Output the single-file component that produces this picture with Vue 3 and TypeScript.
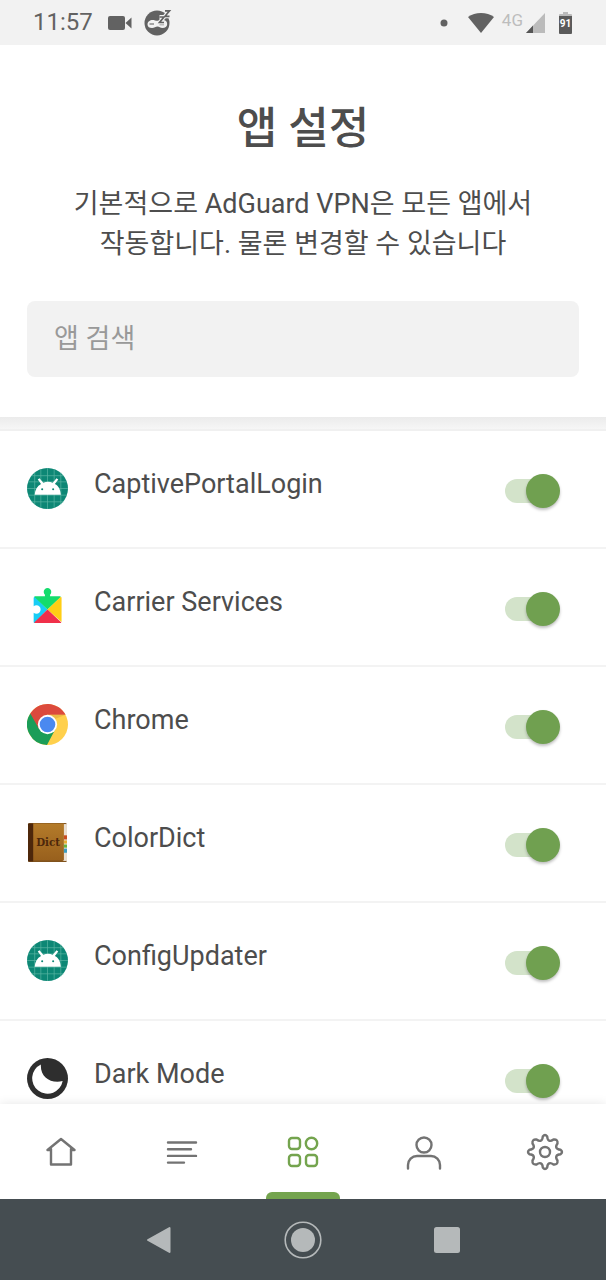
<script setup lang="ts">
import { ref } from 'vue'

type IconName = 'android' | 'services' | 'chrome' | 'dict' | 'dark'

interface AppEntry {
  id: string
  name: string
  icon: IconName
  enabled: boolean
}

const query = ref('')
const apps = ref<AppEntry[]>([
  { id: 'captive', name: 'CaptivePortalLogin', icon: 'android', enabled: true },
  { id: 'carrier', name: 'Carrier Services', icon: 'services', enabled: true },
  { id: 'chrome', name: 'Chrome', icon: 'chrome', enabled: true },
  { id: 'colordict', name: 'ColorDict', icon: 'dict', enabled: true },
  { id: 'config', name: 'ConfigUpdater', icon: 'android', enabled: true },
  { id: 'dark', name: 'Dark Mode', icon: 'dark', enabled: true },
])
</script>

<template>
  <div class="screen" lang="ko">
    <div class="status">
      <div class="status-group">
        <span class="clock">11:57</span>
        <svg class="camera" width="24" height="14" viewBox="0 0 24 14">
          <rect x="0" y="0" width="17" height="14" rx="2" fill="#626262" />
          <path d="M17.500 7 23.500 1.500v11z" fill="#626262" />
        </svg>
        <svg class="sleep" width="28" height="28" viewBox="0 0 28 28">
          <circle cx="13" cy="15" r="12.500" fill="#626262" />
          <path d="M3.500 16.500c0-3 2.500-4.500 5-4.500 2 0 3 .8 5 .8s3-1 5.500-.8c2.500 0 4.200 1.500 4.200 4s-2 4-4.700 4c-2.500 0-3-1.500-5-1.500s-3 1.500-5.500 1.500-4.500-1-4.500-3.500z" fill="#f2f2f2" />
          <path d="M5.500 16h4.500M15.500 16.500h4.500" stroke="#8a8a8a" stroke-width="1.300" />
          <g fill="none">
            <path d="M15.500 9h4.500l-4.500 5.500H20" stroke="#f2f2f2" stroke-width="4" />
            <path d="M21 2.800h4.500L21 8.300h4.500" stroke="#f2f2f2" stroke-width="4" />
            <path d="M15.500 9h4.500l-4.500 5.500H20M21 2.800h4.500L21 8.300h4.500" stroke="#626262" stroke-width="1.700" />
          </g>
        </svg>
      </div>
      <div class="status-group">
        <svg width="8" height="8" viewBox="0 0 8 8"><circle cx="4" cy="4" r="3.500" fill="#626262" /></svg>
        <svg class="wifi" width="28" height="22" viewBox="0 0 28 22">
          <path d="M1 5C8-.5 20-.5 27 5L14 21z" fill="#626262" />
        </svg>
        <span class="net">4G</span>
        <svg width="19" height="20" viewBox="0 0 19 20">
          <path d="M0 20 19 0v20z" fill="#bbb" />
          <path d="M0 20l7-7.400V20z" fill="#555" />
        </svg>
        <svg class="battery" width="13" height="22" viewBox="0 0 13 22">
          <path d="M4 0h5v2h3a1 1 0 0 1 1 1v2H0V3a1 1 0 0 1 1-1h3z" fill="#bbb" />
          <path d="M0 4h13v17a1 1 0 0 1-1 1H1a1 1 0 0 1-1-1z" fill="#5a5a5a" />
          <text x="6.500" y="15" text-anchor="middle" font-size="10" font-weight="700" fill="#fff">91</text>
        </svg>
      </div>
    </div>

    <header class="head">
      <h1>앱 설정</h1>
      <p>기본적으로 AdGuard VPN은 모든 앱에서<br />작동합니다. 물론 변경할 수 있습니다</p>
      <input v-model="query" class="search" type="search" placeholder="앱 검색" aria-label="앱 검색" />
    </header>
    <div class="divider"></div>

    <ul class="list">
      <li v-for="app in apps" :key="app.id" class="row">
        <svg v-if="app.icon === 'android'" class="app-icon" viewBox="0 0 40 40">
          <circle cx="20" cy="20" r="20" fill="#0d8775" />
          <path d="M7.500 4.500v31M13.500 1v38M20 0v40M26.500 1v38M33 4.500v31M4.500 7.500h31M1 13.500h38M0 20h40M1 26.500h38M4.500 33h31" stroke="#58b3a3" stroke-width=".7" />
          <path d="M7.500 26c.3-4.800 2.500-8.500 6.300-10.500L10.500 11.300l1.700-1.300 3.700 4.300a14 14 0 0 1 9.200 0l3.700-4.300 1.700 1.300-3.300 4.200c3.800 2 5.500 5.700 5.800 10.500z" fill="#fff" />
          <circle cx="14.800" cy="20.800" r="1" fill="#0d8775" />
          <circle cx="25.500" cy="20.800" r="1" fill="#0d8775" />
        </svg>
        <svg v-else-if="app.icon === 'services'" class="app-icon" viewBox="0 0 40 40">
          <path d="M6.500 12c0-1 .5-1.500 1.500-1.500L20 23 7.500 36c-.7 0-1-.5-1-1.200v-8.600c.8.600 1.700.9 2.700.9a4 4 0 0 0 0-8.200c-1 0-1.900.3-2.700.9z" fill="#18cdf5" />
          <path d="M8 10h9.500V8.500a3.700 3.700 0 1 1 5 0V10H32c.6 0 1 .3 1 .8L20 23 7 10.500z" fill="#14dc6c" />
          <path d="M33 10.500c.6.300.7.700.7 1.300V35L20 23z" fill="#ffce14" />
          <path d="M20 23 33.500 35.500c-.3.500-.7.700-1.300.7H8c-.5 0-.8-.2-1-.5z" fill="#f0304a" />
        </svg>
        <svg v-else-if="app.icon === 'chrome'" class="app-icon" viewBox="0 0 40 40">
          <circle cx="20" cy="20" r="20" fill="#ffd04c" />
          <path d="M20 20 28 24 19.500 40A20 20 0 0 1 3.200 9.200z" fill="#1b9d58" />
          <path d="M3.200 9.200A20 20 0 0 1 37.600 10.500L20 10.500 11.500 24z" fill="#dc4a3d" />
          <path d="M20 10.500h17.600l-11 4.300z" fill="#d9a63d" opacity=".5" />
          <circle cx="20" cy="20" r="9.400" fill="#fff" />
          <circle cx="20" cy="20" r="7.600" fill="#4a89f0" />
        </svg>
        <svg v-else-if="app.icon === 'dict'" class="app-icon" viewBox="0 0 40 40">
          <defs>
            <linearGradient :id="app.id + '-cover'" x1="0" y1="0" x2="0" y2="1">
              <stop offset="0" stop-color="#b47b2a" />
              <stop offset="1" stop-color="#98601d" />
            </linearGradient>
          </defs>
          <rect x="1" y="1" width="38" height="38" rx="1.500" fill="#80521c" />
          <rect x="35" y="2" width="4" height="36" fill="#eadfd2" />
          <rect x="6" y="1.500" width="30" height="36" :fill="`url(#${app.id}-cover)`" />
          <rect x="1" y="1.500" width="5" height="37" fill="#4d270b" />
          <rect x="36" y="13" width="3" height="4" fill="#c84c22" />
          <rect x="36" y="18" width="3" height="3" fill="#e7ad31" />
          <rect x="36" y="22" width="3" height="3" fill="#65b33b" />
          <rect x="36" y="26" width="3" height="4" fill="#3b9cc0" />
          <text class="dict-text" x="20.500" y="23" text-anchor="middle" font-size="10" font-weight="700" fill="#4d270b">Dict</text>
        </svg>
        <svg v-else class="app-icon" viewBox="0 0 40 40">
          <circle cx="20" cy="20" r="20" fill="#2e2e2e" />
          <path d="M13.500 6.300A15 15 0 1 0 34.800 22.500C23 25 13 19 13.500 6.300z" fill="#fff" />
        </svg>
        <label class="name" :for="app.id">{{ app.name }}</label>
        <input :id="app.id" v-model="app.enabled" class="switch" type="checkbox" role="switch" />
      </li>
    </ul>

    <nav class="tabs">
      <button type="button" class="tab" aria-label="홈">
        <svg width="32" height="32" viewBox="0 0 32 32">
          <path d="M6 13V28.500h20V13M2.500 14 16 3 29.500 14M2.500 14H6M26 14h3.500" />
        </svg>
      </button>
      <button type="button" class="tab" aria-label="목록">
        <svg width="32" height="32" viewBox="0 0 32 32">
          <path d="M2 6.500h28M2 13.200h23M2 19.900h28M2 26.600h16" />
        </svg>
      </button>
      <button type="button" class="tab active" aria-label="앱" aria-current="page">
        <svg width="32" height="32" viewBox="0 0 32 32">
          <rect x="2" y="2" width="11" height="11" rx="3" />
          <circle cx="24.500" cy="7.500" r="5.700" />
          <rect x="2" y="19" width="11" height="11" rx="3" />
          <rect x="19" y="19" width="11" height="11" rx="3" />
        </svg>
      </button>
      <button type="button" class="tab" aria-label="계정">
        <svg width="36" height="36" viewBox="0 0 36 36">
          <circle cx="18" cy="11" r="7.500" />
          <path d="M2 34.500V31a9 9 0 0 1 9-9h14a9 9 0 0 1 9 9v3.500" />
        </svg>
      </button>
      <button type="button" class="tab" aria-label="설정">
        <svg width="38" height="38" viewBox="0 0 38 38">
          <circle cx="19" cy="19" r="5" />
          <path d="M16.800 3.500Q19 .500 21.200 3.500C21.500 8 24 9 27.500 6.500Q32 6 31.500 10.500C29 14 30 16.500 34.500 16.800Q37.500 19 34.500 21.200C30 21.500 29 24 31.500 27.500Q32 32 27.500 31.500C24 29 21.500 30 21.200 34.500Q19 37.500 16.800 34.500C16.500 30 14 29 10.500 31.500Q6 32 6.500 27.500C9 24 8 21.500 3.500 21.200Q.500 19 3.500 16.800C8 16.500 9 14 6.500 10.500Q6 6 10.500 6.500C14 9 16.500 8 16.800 3.500z" />
        </svg>
      </button>
    </nav>

    <div class="system">
      <button type="button" aria-label="뒤로">
        <svg width="26" height="28" viewBox="0 0 26 28"><path d="M2 14 23.500 2v24z" fill="#b5b9ba" stroke="#b5b9ba" stroke-width="2" stroke-linejoin="round" /></svg>
      </button>
      <button type="button" aria-label="홈 화면">
        <svg width="38" height="38" viewBox="0 0 38 38">
          <circle cx="19" cy="19" r="17.800" fill="none" stroke="#b5b9ba" stroke-width="1.600" />
          <circle cx="19" cy="19" r="12" fill="#b5b9ba" />
        </svg>
      </button>
      <button type="button" aria-label="최근 앱">
        <svg width="26" height="26" viewBox="0 0 26 26"><rect width="26" height="26" rx="2.500" fill="#b5b9ba" /></svg>
      </button>
    </div>
  </div>
</template>

<style>
body {
  margin: 0;
  background: #fff;
}
</style>

<style scoped>
.screen {
  display: flex;
  flex-direction: column;
  height: 100vh;
  color: #4d4d4d;
  background: #fff;
  font-family: Roboto, "Noto Sans CJK KR", sans-serif;
}

svg {
  display: block;
  flex: none;
}

button {
  display: flex;
  align-items: center;
  justify-content: center;
  padding: 0;
  border: 0;
  background: none;
}

.status {
  display: flex;
  flex: none;
  align-items: center;
  justify-content: space-between;
  height: 45px;
  padding: 0 34px 0 33px;
  background: #f2f2f2;
  color: #626262;
}

.status-group {
  display: flex;
  align-items: center;
}

.clock {
  font-size: 24px;
  line-height: 45px;
}

.camera {
  margin-left: 15px;
}

.sleep {
  margin-left: 12px;
  margin-bottom: 2px;
}

.wifi {
  margin-left: 19px;
}

.net {
  margin: 0 3px 6px 7px;
  font-size: 17px;
  line-height: 20px;
  color: #bdbdbd;
}

.battery {
  margin-left: 14px;
}

.head {
  flex: none;
  padding: 54px 27px 40px;
  text-align: center;
}

h1 {
  margin: 0;
  font-size: 44px;
  line-height: 60px;
  font-weight: 500;
}

p {
  margin: 25px 0 37px;
  font-size: 27px;
  line-height: 40px;
}

.search {
  display: block;
  box-sizing: border-box;
  width: 100%;
  height: 76px;
  padding: 0 27px;
  border: 0;
  border-radius: 8px;
  outline: 0;
  appearance: none;
  background: #f2f2f2;
  color: #4d4d4d;
  font: inherit;
  font-size: 27px;
}

.search::placeholder {
  color: #999;
  opacity: 1;
}

.divider {
  flex: none;
  height: 12px;
  border-bottom: 2px solid #f0f0f0;
  background: linear-gradient(#ebebeb, #f6f6f6);
}

.list {
  flex: 1;
  min-height: 0;
  margin: 0;
  padding: 0;
  overflow: hidden;
  list-style: none;
}

.row {
  display: flex;
  box-sizing: border-box;
  align-items: center;
  height: 118px;
  padding: 0 46px 2px 27px;
  border-bottom: 2px solid #f3f3f3;
}

.app-icon {
  width: 41px;
  height: 41px;
}

.dict-text {
  font-family: "DejaVu Serif", serif;
}

.name {
  flex: 1;
  margin-left: 26px;
  padding-bottom: 8px;
  font-size: 27px;
  line-height: 36px;
}

.switch {
  display: grid;
  flex: none;
  align-items: center;
  width: 55px;
  height: 34px;
  margin: 6px 0 0;
  appearance: none;
}

.switch::before,
.switch::after {
  grid-area: 1 / 1;
  content: "";
}

.switch::before {
  width: 48px;
  height: 24px;
  border-radius: 12px;
  background: #d3e3ca;
}

.switch::after {
  width: 34px;
  height: 34px;
  border-radius: 50%;
  background: #b5b5b5;
  box-shadow: 0 2px 3px rgba(0, 0, 0, 0.25);
}

.switch:checked::after {
  justify-self: end;
  background: #70a050;
}

.tabs {
  display: grid;
  flex: none;
  grid-template-columns: repeat(5, 1fr);
  height: 95px;
  z-index: 1;
  background: #fff;
  box-shadow: 0 0 10px rgba(0, 0, 0, 0.1);
}

.tab svg {
  fill: none;
  stroke: #737373;
  stroke-width: 2.400;
  stroke-linecap: round;
  stroke-linejoin: round;
}

.tab.active {
  display: grid;
  grid-template-rows: 1fr auto;
  justify-items: center;
}

.tab.active svg {
  margin-top: 7px;
  stroke: #74a44e;
}

.tab.active::after {
  width: 74px;
  height: 7px;
  border-radius: 6px 6px 0 0;
  background: #74a44e;
  content: "";
}

.system {
  display: grid;
  flex: none;
  grid-template-columns: repeat(3, 1fr);
  height: 81px;
  z-index: 2;
  padding: 0 87px;
  background: #454d51;
}
</style>
